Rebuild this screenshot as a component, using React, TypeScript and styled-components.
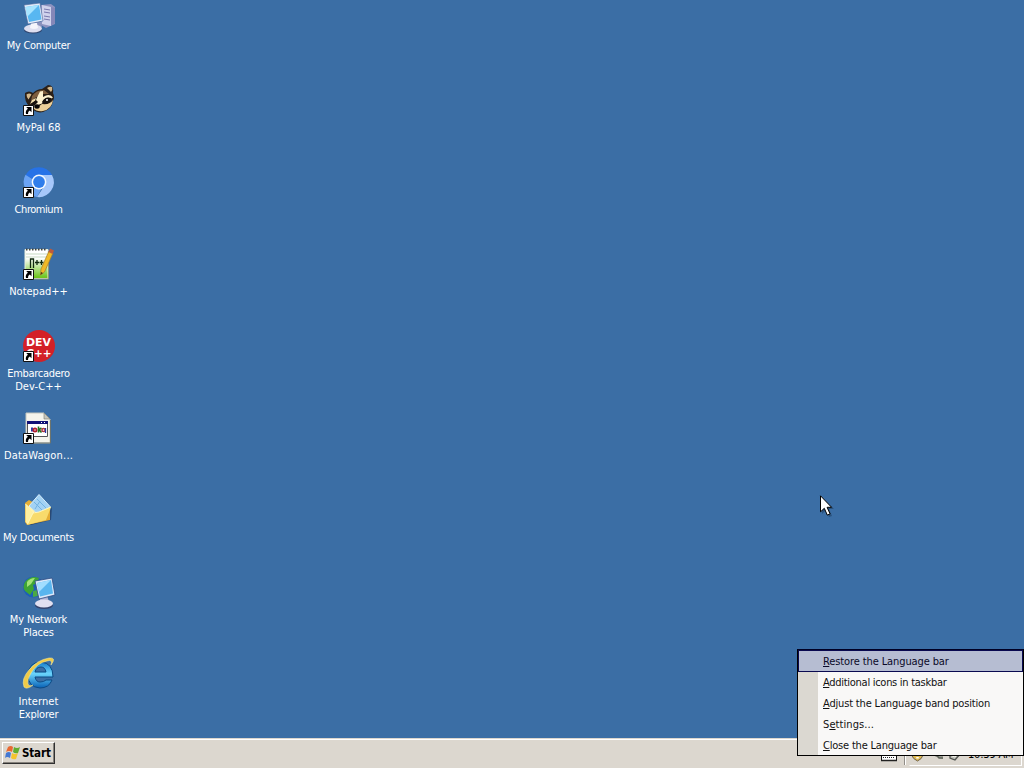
import React from 'react';
import styled, { createGlobalStyle } from 'styled-components';

const GlobalStyle = createGlobalStyle`
  * { box-sizing: border-box; }
  html, body { margin: 0; padding: 0; overflow: hidden; }
  body { background: #3b6ea5; }
`;

const Screen = styled.div`
  position: relative;
  width: 1024px;
  height: 768px;
  display: flex;
  flex-direction: column;
  overflow: hidden;
  background: #3b6ea5;
  font-family: 'DejaVu Sans Condensed', 'DejaVu Sans', sans-serif;
  font-stretch: condensed;
  font-size: 11px;
  line-height: 13px;
  cursor: default;
  user-select: none;
`;

const Desktop = styled.main`
  flex: 1;
  min-height: 0;
  padding-top: 2px;
`;

const IconColumn = styled.div`
  width: 77px;
  display: grid;
  grid-auto-rows: 82px;
`;

const Shortcut = styled.div`
  display: flex;
  flex-direction: column;
  align-items: center;
  gap: 5px;
`;

const Caption = styled.div`
  display: flex;
  flex-direction: column;
  align-items: center;
  color: #fff;
`;

const Line = styled.span<{ $track: number }>`
  white-space: nowrap;
  letter-spacing: ${(p) => p.$track}px;
`;

const Glyph = styled.svg`
  display: block;
  flex: none;
  overflow: visible;
`;

const Taskbar = styled.footer`
  height: 30px;
  flex: none;
  display: flex;
  align-items: flex-start;
  justify-content: space-between;
  padding: 2px 2px 0;
  background: #dcd7cf;
  border-top: 1px solid #dcd7cf;
  box-shadow: inset 0 1px 0 #fff;
`;

const StartButton = styled.div`
  width: 53px;
  height: 22px;
  margin-top: 1px;
  display: flex;
  align-items: center;
  gap: 1px;
  padding-left: 2px;
  color: #000;
  font-weight: bold;
  font-size: 11.5px;
  background: #dcd7cf;
  border: 1px solid;
  border-color: #fff #303030 #303030 #fff;
  box-shadow: inset -1px -1px 0 #85817b;
`;

const TrayArea = styled.div`
  display: flex;
  height: 26px;
  align-items: flex-start;
`;

const KeyboardSlot = styled.div`
  width: 24px;
  padding-top: 7px;
`;

const Grip = styled.div`
  width: 2px;
  height: 24px;
  margin-right: 3px;
  border-left: 1px solid #918d87;
  border-right: 1px solid #fff;
`;

const Tray = styled.div`
  width: 113px;
  height: 25px;
  display: flex;
  align-items: center;
  gap: 3px;
  border: 1px solid;
  border-color: #918d87 #fff #fff #dcd7cf;
  color: #000;
`;

const Clock = styled.span`
  margin-left: 1px;
  margin-top: 2px;
  white-space: nowrap;
  letter-spacing: -0.2px;
`;

const Menu = styled.div`
  position: absolute;
  left: 797px;
  top: 649px;
  width: 227px;
  height: 107px;
  display: flex;
  flex-direction: column;
  padding-top: 1px;
  border: 1px solid #000;
  border-top-color: #000024;
  background: linear-gradient(to right, #dbd8d1 20px, #f9f8f7 20px);
`;

const MenuItem = styled.div<{ $active?: boolean }>`
  height: ${(p) => (p.$active ? 22 : 21)}px;
  margin-top: ${(p) => (p.$active ? -1 : 0)}px;
  flex: none;
  display: flex;
  align-items: center;
  padding-left: ${(p) => (p.$active ? 24 : 25)}px;
  color: ${(p) => (p.$active ? '#0a0a28' : '#111')};
  background: ${(p) => (p.$active ? '#b6bdd2' : 'transparent')};
  border: ${(p) => (p.$active ? '1px solid #0a0a50' : 'none')};
`;

const Key = styled.span`
  text-decoration: underline;
  text-underline-offset: 1px;
  text-decoration-thickness: 1px;
  text-decoration-skip-ink: none;
`;

const Pointer = styled.svg`
  position: absolute;
  left: 820px;
  top: 495px;
  overflow: visible;
`;

const ShortcutArrow = () => (
  <g>
    <path d="M0.5 21.5h10v10h-10z" fill="#fff" stroke="#111" strokeWidth="1" />
    <path d="M3.2 23h5.3v5.2l-1.7-1.7c-1.5 1-1.9 2-1.7 3.5H3c-.7-2.2.1-4 1.9-5.3z" fill="#000" />
  </g>
);

const ComputerIcon = () => (
  <Glyph width="32" height="32" viewBox="0 0 32 32">
    <path d="M18 3l10-1 4 3v17l-9 4-5-3z" fill="#8e93c0" />
    <path d="M19 3l9 2v19l-9-2z" fill="#d0d2ec" />
    <path d="M28 5l4 1v15l-4 3z" fill="#8587b8" />
    <path d="M21 7l6 1M21 10l6 1M21 14l6 1M21 17l6 1" stroke="#7777ac" />
    <path d="M10 20h8l1 5h-9z" fill="#8991bc" />
    <ellipse cx="10" cy="28" rx="9" ry="3.6" fill="#30466f" />
    <ellipse cx="10" cy="26.5" rx="9" ry="4" fill="#dedff0" />
    <path d="M8 21h6l1 5q-4 2-8 0z" fill="#f5f5fb" />
    <path d="M1 3l16-2 3 18-15 3z" fill="#e4ebf8" stroke="#46659a" strokeWidth=".6" />
    <path d="M2.5 5l13.5-2 2.5 14.5-12.5 2.5z" fill="#58b7f1" />
    <path d="M2.5 5l13.5-2-12 12z" fill="#a7e4ff" />
  </Glyph>
);

const RaccoonIcon = () => (
  <Glyph width="32" height="32" viewBox="0 0 32 32">
    <path d="M2 9q4-3 8 0 4-4 9-4l6-4q6 0 5 8 2 4 0 8-1 8-10 11-7 2-13-5-6-5-5-14z" fill="#2b2018" />
    <path d="M3.5 10.5q3-2 5 0l-3 5q-2-2-2-5zM24 4q3-2 5-1 1 3-1 5z" fill="#d4b98c" />
    <path d="M9 12q4-6 12-6l5 4-7 0-7 4-4 3z" fill="#7e5d3e" />
    <path d="M17 7.5l3-.5 0 6 3-1.5q4-1.5 7 2l-2 1q-4-2-7 1l-2 4-3 1-3 4-7 0 6-6 2-5z" fill="#fdf0cd" />
    <path d="M9 16l4-2-1 3-5 3z" fill="#f3dfae" />
    <path d="M19 20q8 1 11-4-1 9-10 11-6 1-10-3l5-1z" fill="#eccf98" />
    <path d="M19 18q3-6 9-4 0 6-7 6zM8 20l5-4 2 2-4 4z" fill="#18120e" />
    <circle cx="24" cy="16" r="1" fill="#fff" />
    <ellipse cx="14" cy="22.5" rx="2.7" ry="2.2" fill="#080606" />
    <ShortcutArrow />
  </Glyph>
);

const ChromiumIcon = () => (
  <Glyph width="32" height="32" viewBox="0 0 32 32">
    <path d="M16 16L2.5 9.3A15 15 0 0 1 29 9z" fill="#2672e7" />
    <path d="M2.5 8.8A15 15 0 0 0 14 31L20 20z" fill="#6aa3f4" />
    <path d="M16 9h13A15 15 0 0 1 14 31L22 19z" fill="#a6c7fa" />
    <circle cx="16" cy="16" r="7.4" fill="#f4f9ff" />
    <circle cx="16" cy="16" r="5.9" fill="#2f7deb" />
    <ShortcutArrow />
  </Glyph>
);

const NotepadIcon = () => (
  <Glyph width="32" height="32" viewBox="0 0 32 32">
    <defs>
      <linearGradient id="npGreen" x2="0" y2="1">
        <stop offset=".3" stopColor="#fff" /><stop offset=".95" stopColor="#6fc51f" />
      </linearGradient>
    </defs>
    <path d="M2 1.5h23v29H2z" fill="url(#npGreen)" stroke="#e9efdc" />
    <path d="M3 1.5h21" stroke="#444" strokeWidth="2" strokeDasharray="1.5 1.5" />
    <path d="M3 6h21M3 9h21" stroke="#c7d9c3" />
    <path d="M25.5 4v27H11" fill="none" stroke="#8b9579" />
    <path d="M7.5 20v-9h3v9M12 14.5h4M14 12v5M16.5 14.5h4M18.5 12v5" fill="none" stroke="#10280f" strokeWidth="1.3" />
    <path d="M26 3l4 2-8.5 19-4 3 .5-6z" fill="#f0b925" stroke="#a77b25" strokeWidth=".7" />
    <path d="M25.5 4l1.5-3.500 4 2-1.500 3.500z" fill="#bd5a3c" />
    <path d="M17.500 27l.5-3 2 1z" fill="#463719" />
    <ShortcutArrow />
  </Glyph>
);

const LogoText = styled.text`
  font: bold 11px 'DejaVu Sans', sans-serif;
  fill: #fff;
`;

const DevIcon = () => (
  <Glyph width="32" height="32" viewBox="0 0 32 32">
    <circle cx="16" cy="16" r="16" fill="#d32027" />
    <LogoText x="3" y="16" textLength="25" lengthAdjust="spacingAndGlyphs">DEV</LogoText>
    <LogoText x="3.500" y="27" textLength="25" lengthAdjust="spacingAndGlyphs">C++</LogoText>
    <ShortcutArrow />
  </Glyph>
);

const BatchIcon = () => (
  <Glyph width="32" height="32" viewBox="0 0 32 32">
    <path d="M3 1h18l6 6v24H3z" fill="#f5f4ec" stroke="#c5c6bd" />
    <path d="M21 1v6h6z" fill="#c8c7bc" stroke="#77796f" strokeWidth=".6" />
    <path d="M27.500 8v23H5" fill="none" stroke="#6d746e" />
    <path d="M4.500 9.500h20v15h-20z" fill="#fff" stroke="#555" />
    <path d="M4 9h21v3H4z" fill="#101076" />
    <path d="M18 10.500h1M21 10.500h1" stroke="#fff" />
    <path d="M9 15.500v4" stroke="#283ba9" strokeWidth="2" />
    <circle cx="12" cy="18" r="1.600" fill="none" stroke="#b21e2e" strokeWidth="1.800" />
    <path d="M15.500 14.500v6M15.500 18l3-2M16 17.500l2.500 3" stroke="#207020" strokeWidth="1.600" />
    <circle cx="20.500" cy="18" r="1.600" fill="none" stroke="#b0303a" strokeWidth="1.500" />
    <path d="M22.500 16v5" stroke="#2735a2" strokeWidth="1.300" />
    <ShortcutArrow />
  </Glyph>
);

const DocumentsIcon = () => (
  <Glyph width="32" height="32" viewBox="0 0 32 32">
    <path d="M4 31l18-5 7-13-1 13-20 5z" fill="#294975" />
    <path d="M2 9l4-3 5 3 16 4v13L4 31 2 28z" fill="#e5ae36" />
    <path d="M6 12L16 .5l11 12-9 11z" fill="#a3d2f4" stroke="#d8effd" />
    <path d="M11 8l9 9M14 5l9 9M17 7l-5 8" stroke="#72b2e3" />
    <path d="M2.500 10l9 7-3 10-4 3-2-2z" fill="#fff0a0" />
    <path d="M10 19l6-1 12-5-5 13L4 31z" fill="#f8db6c" />
    <path d="M2.500 10l8 8-6 12M10 19l6-1 12-5" fill="none" stroke="#fff7bc" />
  </Glyph>
);

const NetworkIcon = () => (
  <Glyph width="32" height="32" viewBox="0 0 32 32">
    <circle cx="10.500" cy="11" r="10.500" fill="#1d5fb8" />
    <path d="M2 6Q8-1 16 2l-2 5-4 2 1 4-4 6-5-4q-3-4 0-9z" fill="#3fa535" />
    <path d="M4 6q3-4 8-4l-4 6-4 3z" fill="#a1e376" />
    <path d="M10 15l4-1 1 6-5 1z" fill="#4aa944" />
    <path d="M17 19h7l2 7h-9z" fill="#b0b1d5" />
    <ellipse cx="21" cy="29.500" rx="9" ry="3.500" fill="#35446d" />
    <ellipse cx="21" cy="27.500" rx="9" ry="4" fill="#e1e0f0" />
    <path d="M12 5l17-3 3 17-16 4z" fill="#dce9fa" stroke="#2e4a82" strokeWidth=".8" />
    <path d="M14 7l14-3 2 13.500-13 3z" fill="#59b5ef" />
    <path d="M14 7l14-3-12 12z" fill="#a1ddff" />
  </Glyph>
);

const ExplorerIcon = () => (
  <Glyph width="32" height="32" viewBox="0 0 32 32">
    <defs>
      <linearGradient id="ieBlue" x2="0" y2="1">
        <stop stopColor="#1479c8" /><stop offset=".45" stopColor="#6bd4fc" /><stop offset="1" stopColor="#0860b5" />
      </linearGradient>
    </defs>
    <path d="M30 19H12q1 5 5 5 4 0 6-2h6q-3 8-12 8-12-1-12-13Q6 4 18 4q12 1 12 15zM12 14h11q-1-5-5-5-5 0-6 5z" fill="url(#ieBlue)" fillRule="evenodd" stroke="#0d4a84" strokeWidth="1" />
    <path d="M28 7q2-6-4-4Q14 5 8 15 4 22 5 26q1 3 5 1-6 5-9 2-3-8 5-17Q14 2 26 0q8-1 2 7z" fill="#f0cb48" stroke="#fff09a" strokeWidth=".5" />
  </Glyph>
);

const WindowsFlag = () => (
  <Glyph width="16" height="16" viewBox="0 0 16 16">
    <path d="M3 2q3-2 5 0L7 7Q4 5 1 7z" fill="#e96932" />
    <path d="M9 2q3 2 6 0l-2 6q-3 1-5-1z" fill="#61ad31" />
    <path d="M1 8q3-2 5 0l-1 5q-3-2-5 0z" fill="#4579d3" />
    <path d="M7 8q3 2 6 0l-2 6q-3 1-5-1z" fill="#f4c42f" />
  </Glyph>
);

const KeyboardIcon = () => (
  <Glyph width="17" height="14" viewBox="0 0 17 14">
    <path d="M1.500 1.500h15v11h-15z" fill="#fff" stroke="#111" />
    <path d="M3 4h12M3 6.500h12M3 9.500h12" stroke="#222" strokeDasharray="1 1" />
    <path d="M1 12.500h16" stroke="#222" strokeWidth="1.500" />
  </Glyph>
);

const UpdateIcon = () => (
  <Glyph width="16" height="16" viewBox="0 0 16 16">
    <path d="M1.500 3l6-2 5.500 2v6q-1 4-5.500 6-4.500-2-6-6z" fill="#e0bb52" stroke="#6f6450" />
    <path d="M7.500 4v6M7.500 11v1.500" stroke="#fff" strokeWidth="2.500" />
  </Glyph>
);

const SafelyRemoveIcon = () => (
  <Glyph width="16" height="16" viewBox="0 0 16 16">
    <path d="M1 7l5-2 8 3v5l-4-1-4-3-5-1z" fill="#9b9d93" />
    <path d="M5 9q4 1 5 3h4" fill="none" stroke="#5e6359" strokeWidth="1.500" />
  </Glyph>
);

const SpeakerIcon = () => (
  <Glyph width="16" height="16" viewBox="0 0 16 16">
    <path d="M2 9l7-6 4 4-6 7-5-2z" fill="#bfc0b9" stroke="#50534f" strokeWidth="1.300" />
    <path d="M4 10l3 1 4-4" fill="none" stroke="#f4f3ea" />
  </Glyph>
);

type Entry = { icon: React.FC; lines: [string, number][] };

const shortcuts: Entry[] = [
  { icon: ComputerIcon, lines: [['My Computer', -0.3]] },
  { icon: RaccoonIcon, lines: [['MyPal 68', -0.05]] },
  { icon: ChromiumIcon, lines: [['Chromium', -0.45]] },
  { icon: NotepadIcon, lines: [['Notepad++', 0]] },
  { icon: DevIcon, lines: [['Embarcadero', -0.3], ['Dev-C++', 0.05]] },
  { icon: BatchIcon, lines: [['DataWagon...', 0.2]] },
  { icon: DocumentsIcon, lines: [['My Documents', -0.25]] },
  { icon: NetworkIcon, lines: [['My Network', -0.15], ['Places', -0.2]] },
  { icon: ExplorerIcon, lines: [['Internet', 0.1], ['Explorer', -0.2]] },
];

const menu: { before: string; key: string; rest: string; track: number }[] = [
  { before: '', key: 'R', rest: 'estore the Language bar', track: -0.11 },
  { before: '', key: 'A', rest: 'dditional icons in taskbar', track: -0.28 },
  { before: '', key: 'A', rest: 'djust the Language band position', track: -0.17 },
  { before: 'S', key: 'e', rest: 'ttings...', track: 0.08 },
  { before: '', key: 'C', rest: 'lose the Language bar', track: -0.2 },
];

export default function App() {
  return (
    <Screen>
      <GlobalStyle />
      <Desktop>
        <IconColumn>
          {shortcuts.map(({ icon: Icon, lines }) => (
            <Shortcut key={lines[0][0]}>
              <Icon />
              <Caption>
                {lines.map(([text, track]) => (
                  <Line key={text} $track={track}>{text}</Line>
                ))}
              </Caption>
            </Shortcut>
          ))}
        </IconColumn>
      </Desktop>
      <Taskbar>
        <StartButton>
          <WindowsFlag />
          <Line $track={-0.15}>Start</Line>
        </StartButton>
        <TrayArea>
          <KeyboardSlot><KeyboardIcon /></KeyboardSlot>
          <Grip />
          <Tray>
            <UpdateIcon />
            <SafelyRemoveIcon />
            <SpeakerIcon />
            <Clock>10:39 AM</Clock>
          </Tray>
        </TrayArea>
      </Taskbar>
      <Menu>
        {menu.map((item, i) => (
          <MenuItem key={item.rest} $active={i === 0}>
            <Line $track={item.track}>
              {item.before}<Key>{item.key}</Key>{item.rest}
            </Line>
          </MenuItem>
        ))}
      </Menu>
      <Pointer width="13" height="21" viewBox="0 0 13 21">
        <path d="M2 3v16l4-4 3 7 3-1-3-7h5z" fill="#17304f" opacity=".45" />
        <path d="M.5.8v16l3.800-3.500 3 6.800 2.800-1.200-3-6.600h4.500z" fill="#fff" stroke="#000" />
      </Pointer>
    </Screen>
  );
}
